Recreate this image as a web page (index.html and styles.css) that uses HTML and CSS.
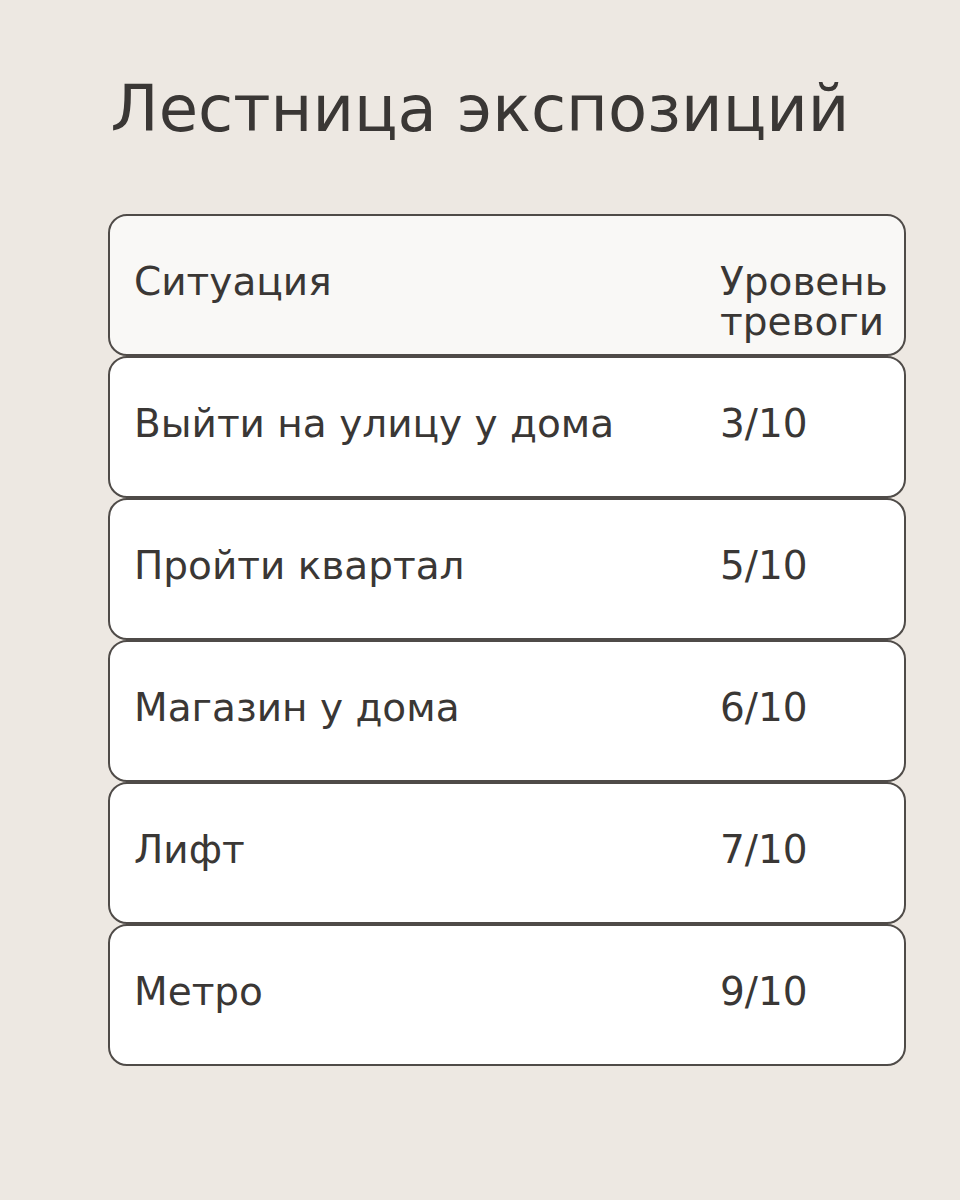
FILE: index.html
```html
<!DOCTYPE html>
<html lang="ru">
<head>
<meta charset="utf-8">
<title>Лестница экспозиций</title>
<link rel="stylesheet" href="styles.css">
</head>
<body>
<main class="page">
  <h1 class="title">Лестница экспозиций</h1>
  <div class="ladder">
    <div class="row row-head">
      <div class="cell">Ситуация</div>
      <div class="cell cell-level">Уровень тревоги</div>
    </div>
    <div class="row">
      <div class="cell">Выйти на улицу у дома</div>
      <div class="cell cell-level">3/10</div>
    </div>
    <div class="row">
      <div class="cell">Пройти квартал</div>
      <div class="cell cell-level">5/10</div>
    </div>
    <div class="row">
      <div class="cell">Магазин у дома</div>
      <div class="cell cell-level">6/10</div>
    </div>
    <div class="row">
      <div class="cell">Лифт</div>
      <div class="cell cell-level">7/10</div>
    </div>
    <div class="row">
      <div class="cell">Метро</div>
      <div class="cell cell-level">9/10</div>
    </div>
  </div>
</main>
</body>
</html>
```

FILE: styles.css
```css
html, body {
  margin: 0;
  padding: 0;
}
body {
  background: #ede8e2;
  color: #3a3735;
  font-family: "DejaVu Sans", "Noto Sans", sans-serif;
  width: 960px;
  height: 1200px;
}
.page {
  padding-top: 72px;
}
.title {
  margin: 0;
  font-size: 64px;
  font-weight: normal;
  line-height: normal;
  text-align: center;
  color: #3a3735;
}
.ladder {
  margin: 68px 54px 0 108px;
  display: flex;
  flex-direction: column;
}
.row {
  box-sizing: border-box;
  height: 142px;
  border: 2px solid #4f4b48;
  border-radius: 19px;
  background: #ffffff;
  display: grid;
  grid-template-columns: 1fr 176px;
  align-items: start;
  padding: 46px 8px 0 24px;
  font-size: 39px;
  line-height: 40px;
}
.row-head {
  background: #f9f8f6;
}
.cell {
  min-width: 0;
}
```
